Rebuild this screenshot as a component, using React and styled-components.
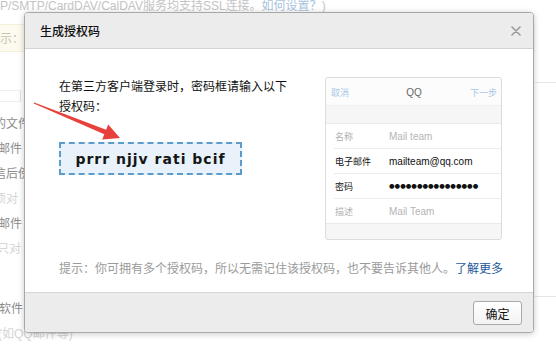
import React from "react";
import styled, { createGlobalStyle } from "styled-components";

const GlobalStyle = createGlobalStyle`
  html, body { margin: 0; padding: 0; background: #fff; }
  body {
    width: 556px; height: 347px; overflow: hidden; position: relative;
    font-family: "Liberation Sans", "Noto Sans CJK SC", sans-serif;
    font-size: 12px;
  }
`;

/* ---------- faded page behind the dialog ---------- */
const BgPage = styled.div`
  display: grid;
  grid-template-columns: 1fr 21px;
  height: 347px;
  overflow: hidden;
`;
const BgLeft = styled.div`
  display: flex;
  flex-direction: column;
  overflow: hidden;
`;
const BgTopLine = styled.div`
  margin: 0;
  height: 13px;
  line-height: 13px;
  font-size: 12px;
  color: #c4c4c4;
  white-space: nowrap;
`;
const BgLink = styled.span`
  color: #a8c3de;
`;
const BgNotice = styled.div`
  margin-top: 11px;
  height: 35px;
  background: #fdfaf0;
  border-top: 1px solid #f6efd9;
  border-bottom: 1px solid #f6efd9;
  display: flex;
  align-items: center;
  color: #c9c4b4;
  font-size: 12px;
  white-space: nowrap;
`;
const BgInput = styled.div`
  margin-top: 38px;
  width: 20px;
  height: 14px;
  border-right: 1px solid #e2e2e2;
  border-top: 1px solid #efefef;
  border-bottom: 1px solid #efefef;
`;
const BgItem = styled.div`
  height: 25px;
  line-height: 25px;
  margin-left: ${(p) => p.$shift || -6}px;
  margin-top: ${(p) => p.$gap || 0}px;
  color: ${(p) => (p.$light ? "#d4d4d4" : "#8c8c8c")};
  white-space: nowrap;
  font-size: 12px;
`;
const BgRight = styled.div`
  display: flex;
  flex-direction: column;
`;
const BgRule = styled.div`
  margin-top: ${(p) => p.$top}px;
  height: 1px;
  background: #e6e6e6;
`;

/* ---------- dialog ---------- */
const Dialog = styled.div`
  position: absolute;
  left: 24px;
  top: 12px;
  width: 510px;
  height: 321px;
  box-sizing: border-box;
  border: 1px solid #a8a8a8;
  border-radius: 4px;
  background: #fff;
  box-shadow: 0 1px 6px rgba(0, 0, 0, 0.22);
  display: flex;
  flex-direction: column;
  overflow: hidden;
`;
const Header = styled.div`
  height: 35px;
  flex: none;
  background: #ececec;
  border-bottom: 1px solid #d4d4d4;
  display: flex;
  align-items: center;
  justify-content: space-between;
  padding: 0 12px 0 15px;
`;
const Title = styled.div`
  font-size: 12px;
  color: #111;
  font-weight: 500;
`;
const CloseBtn = styled.button`
  border: 0;
  background: none;
  padding: 0;
  width: 10px;
  height: 10px;
  display: flex;
  cursor: pointer;
`;
const Body = styled.div`
  flex: 1;
  display: flex;
  flex-direction: column;
  padding: 28px 31px 0 34px;
`;
const ContentRow = styled.div`
  display: flex;
  justify-content: space-between;
  align-items: flex-start;
`;
const LeftCol = styled.div`
  display: flex;
  flex-direction: column;
`;
const Instruction = styled.p`
  margin: 0;
  width: 230px;
  line-height: 20px;
  font-size: 12px;
  color: #111;
`;
const CodeBox = styled.div`
  margin-top: 25px;
  width: 183px;
  height: 33px;
  box-sizing: border-box;
  border: 2px dashed #5c9ccc;
  background: #e9f2fa;
  display: flex;
  align-items: center;
  justify-content: center;
  font-family: "DejaVu Sans", sans-serif;
  font-weight: bold;
  font-size: 14px;
  letter-spacing: 1px;
  color: #151515;
`;
const Phone = styled.div`
  width: 177px;
  height: 163px;
  box-sizing: border-box;
  border: 1px solid #dcdcdc;
  border-radius: 3px;
  background: #f6f6f6;
  display: flex;
  flex-direction: column;
  overflow: hidden;
`;
const PhoneHead = styled.div`
  height: 25px;
  background: #fcfcfc;
  border-bottom: 1px solid #f0f0f0;
  display: grid;
  grid-template-columns: 1fr auto 1fr;
  align-items: center;
  padding: 2px 4px 0 5px;
  font-size: 9px;
`;
const HeadLink = styled.span`
  color: #a9c8e6;
  justify-self: ${(p) => p.$align};
`;
const HeadTitle = styled.span`
  color: #666;
  font-size: 10px;
`;
const Rows = styled.div`
  margin-top: 17px;
  background: #fff;
  border-top: 1px solid #e9e9e9;
  border-bottom: 1px solid #e9e9e9;
  padding-left: 8px;
`;
const Row = styled.div`
  height: 24px;
  display: flex;
  align-items: center;
  padding-left: 1px;
  border-top: ${(p) => (p.$first ? "0" : "1px solid #ececec")};
`;
const Label = styled.span`
  width: 54px;
  font-size: 9px;
  color: ${(p) => (p.$muted ? "#b0b0b0" : "#111")};
`;
const Value = styled.span`
  font-family: ${(p) => (p.$dots ? '"DejaVu Sans", sans-serif' : "inherit")};
  font-size: ${(p) => (p.$dots ? "6.4px" : "10px")};
  color: ${(p) => (p.$muted ? "#b5b5b5" : "#111")};
`;
const Hint = styled.p`
  margin: 19px 0 0;
  line-height: 20px;
  font-size: 12px;
  color: #9a9a9a;
  white-space: nowrap;
`;
const HintLink = styled.a`
  color: #25589b;
  text-decoration: none;
`;
const Footer = styled.div`
  flex: none;
  height: 40px;
  box-sizing: border-box;
  background: #ececec;
  border-top: 1px solid #d6d6d6;
  display: flex;
  justify-content: flex-end;
  align-items: flex-start;
  padding: 8px 11px 0 0;
`;
const OkButton = styled.button`
  width: 49px;
  height: 24px;
  border: 1px solid #a9a9a9;
  border-radius: 3px;
  background: linear-gradient(#ffffff, #f3f3f3);
  font-family: "Liberation Sans", "Noto Sans CJK SC", sans-serif;
  font-size: 12px;
  color: #111;
  padding: 0;
  cursor: pointer;
`;
const ArrowLayer = styled.svg`
  position: absolute;
  left: 0;
  top: 0;
  pointer-events: none;
`;

const CloseIcon = () => (
  <svg width="10" height="10" viewBox="0 0 10 10">
    <path d="M1 1L9 9M9 1L1 9" stroke="#9a9a9a" strokeWidth="1.6" strokeLinecap="round" />
  </svg>
);

const Arrow = () => {
  // coordinates relative to the dialog box
  const pts = [
    [9.2, 89.5],
    [81.1, 116.7],
    [83.2, 111.6],
    [95, 125],
    [77.2, 126.4],
    [79.3, 121.3],
    [8.8, 90.5],
  ]
    .map((p) => p.join(","))
    .join(" ");
  return (
    <ArrowLayer width="120" height="140" viewBox="0 0 120 140">
      <polygon points={pts} fill="#e8413b" />
    </ArrowLayer>
  );
};

const rows = [
  { label: "名称", value: "Mail team", muted: true },
  { label: "电子邮件", value: "mailteam@qq.com" },
  { label: "密码", value: "●●●●●●●●●●●●●●●●", dots: true },
  { label: "描述", value: "Mail Team", muted: true },
];

export default function App() {
  return (
    <>
      <GlobalStyle />
      <BgPage>
        <BgLeft>
          <BgTopLine>
            P/SMTP/CardDAV/CalDAV服务均支持SSL连接。<BgLink>如何设置？</BgLink>)
          </BgTopLine>
          <BgNotice>示：查看</BgNotice>
          <BgInput />
          <BgItem $gap={10}>的文件</BgItem>
          <BgItem $shift={-2}>邮件</BgItem>
          <BgItem>信后傍</BgItem>
          <BgItem $light>项对</BgItem>
          <BgItem $shift={-2}>邮件</BgItem>
          <BgItem $shift={-3} $light>只对</BgItem>
          <BgItem $shift={-1} $gap={35}>软件</BgItem>
          <BgItem $shift={-2} $light>(如QQ邮件等)</BgItem>
        </BgLeft>
        <BgRight>
          <BgRule $top={82} />
          <BgRule $top={213} />
        </BgRight>
      </BgPage>

      <Dialog>
        <Header>
          <Title>生成授权码</Title>
          <CloseBtn aria-label="关闭">
            <CloseIcon />
          </CloseBtn>
        </Header>
        <Body>
          <ContentRow>
            <LeftCol>
              <Instruction>在第三方客户端登录时，密码框请输入以下授权码：</Instruction>
              <CodeBox>prrr njjv rati bcif</CodeBox>
            </LeftCol>
            <Phone>
              <PhoneHead>
                <HeadLink $align="start">取消</HeadLink>
                <HeadTitle>QQ</HeadTitle>
                <HeadLink $align="end">下一步</HeadLink>
              </PhoneHead>
              <Rows>
                {rows.map((r, i) => (
                  <Row key={r.label} $first={i === 0}>
                    <Label $muted={r.muted}>{r.label}</Label>
                    <Value $muted={r.muted} $dots={r.dots}>{r.value}</Value>
                  </Row>
                ))}
              </Rows>
            </Phone>
          </ContentRow>
          <Hint>
            提示：你可拥有多个授权码，所以无需记住该授权码，也不要告诉其他人。
            <HintLink href="#">了解更多</HintLink>
          </Hint>
        </Body>
        <Footer>
          <OkButton>确定</OkButton>
        </Footer>
        <Arrow />
      </Dialog>
    </>
  );
}
